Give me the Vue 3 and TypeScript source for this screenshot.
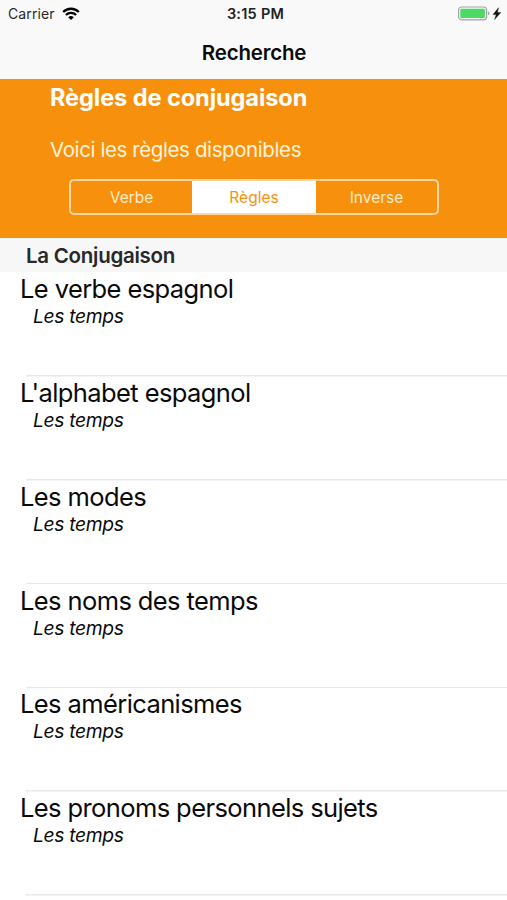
<script setup lang="ts">
interface Rule {
  title: string
  category: string
}

const segments: string[] = ['Verbe', 'Règles', 'Inverse']
const selected = 'Règles'
const rules: Rule[] = [
  'Le verbe espagnol',
  "L'alphabet espagnol",
  'Les modes',
  'Les noms des temps',
  'Les américanismes',
  'Les pronoms personnels sujets',
].map((title) => ({ title, category: 'Les temps' }))
</script>

<template>
  <main class="screen">
    <header class="top">
      <div class="status">
        <div class="carrier">
          <span>Carrier</span>
          <svg class="wifi" viewBox="0 0 18 14" width="18" height="14">
            <path d="M1.2 5 A11 11 0 0 1 16.8 5" />
            <path d="M3.9 8 A7.2 7.2 0 0 1 14.1 8" />
            <path class="dot" d="M9 13 L6.2 10.3 A4 4 0 0 1 11.8 10.3 Z" />
          </svg>
        </div>
        <time class="clock">3:15 PM</time>
        <div class="power">
          <svg viewBox="0 0 44 16" width="44" height="16">
            <rect x="0.6" y="1" width="28" height="12.8" rx="3" fill="none" stroke="#a3a3a3" stroke-width="1.2" />
            <rect x="2.3" y="2.7" width="24.6" height="9.4" rx="1" fill="#4cd964" />
            <path d="M30 5.2 Q33 7.4 30 9.6 Z" fill="#a3a3a3" />
            <path d="M40.6 1.7 L35 8.6 H38.2 L36.6 13.6 L42.8 6.5 H39.4 Z" fill="#111" stroke="#111" stroke-width="0.4" />
          </svg>
        </div>
      </div>
      <h1 class="nav-title">Recherche</h1>
    </header>
    <section class="banner">
      <h2 class="heading">Règles de conjugaison</h2>
      <p class="intro">Voici les règles disponibles</p>
      <div class="segments">
        <button v-for="s in segments" :key="s" class="segment" :class="{ active: s === selected }">{{ s }}</button>
      </div>
    </section>
    <h3 class="section">La Conjugaison</h3>
    <ul class="list">
      <li v-for="r in rules" :key="r.title" class="row">
        <span class="title">{{ r.title }}</span>
        <em class="category">{{ r.category }}</em>
      </li>
    </ul>
  </main>
</template>

<style>
body {
  background: #fff;
}
</style>

<style scoped>
.screen {
  width: 507px;
  height: 900px;
  overflow: hidden;
  background: #fff;
  color: #0a0a0a;
  font-family: Inter, 'Liberation Sans', sans-serif;
}
.top {
  height: 79px;
  background: #f9f9f9;
}
.status {
  display: grid;
  grid-template-columns: 1fr auto 1fr;
  align-items: center;
  height: 27px;
  padding: 0 5px 0 8px;
  font-size: 14px;
}
.carrier {
  display: flex;
  align-items: center;
  gap: 7px;
  color: #2a2a2a;
  letter-spacing: 0.1px;
}
.wifi path {
  fill: none;
  stroke: #000;
  stroke-width: 2.3;
}
.wifi .dot {
  fill: #000;
  stroke: none;
}
.clock {
  padding-left: 1px;
  color: #222;
  font-size: 14.5px;
  font-weight: 600;
  letter-spacing: 0.25px;
}
.power {
  display: flex;
  justify-content: flex-end;
}
.nav-title {
  margin: 0;
  padding-left: 1px;
  font-size: 20.5px;
  font-weight: 600;
  letter-spacing: -0.2px;
  line-height: 51px;
  text-align: center;
}
.banner {
  box-sizing: border-box;
  height: 159px;
  padding: 4px 68px 0 50px;
  background: #f7910d;
  color: #fff;
}
.heading {
  margin: 0;
  font-size: 23.6px;
  font-weight: 700;
  letter-spacing: -0.1px;
  line-height: 30px;
  white-space: nowrap;
}
.intro {
  margin: 22px 0 14px;
  color: #fff3d9;
  font-size: 20.5px;
  letter-spacing: -0.4px;
  line-height: 30px;
  white-space: nowrap;
}
.segments {
  display: grid;
  grid-template-columns: 121px 124px 1fr;
  box-sizing: border-box;
  height: 36px;
  margin-left: 19px;
  border: 2px solid #fdd6a0;
  border-radius: 5px;
  overflow: hidden;
}
.segment {
  padding: 0;
  border: 0;
  background: transparent;
  color: #ffecc8;
  font: 400 15.5px Inter, 'Liberation Sans', sans-serif;
}
.active {
  margin: -1px 0;
  background: #fff;
  color: #f7910d;
}
.section {
  margin: 0;
  height: 34px;
  padding-left: 26px;
  background: #f7f7f7;
  color: #282828;
  font-size: 20.5px;
  font-weight: 600;
  letter-spacing: -0.27px;
  line-height: 36px;
}
.list {
  margin: 0;
  padding: 1px 0 0;
  list-style: none;
}
.row {
  display: flex;
  flex-direction: column;
  box-sizing: border-box;
  height: 103.8px;
  padding-left: 20px;
  background: linear-gradient(#e9e9eb, #e9e9eb) 26px 100% / 100% 1.5px no-repeat;
  white-space: nowrap;
}
.title {
  margin-top: -0.8px;
  font-size: 25.5px;
  letter-spacing: -0.6px;
  line-height: 33px;
}
.category {
  padding-left: 13px;
  font-size: 19.3px;
  letter-spacing: -0.35px;
  line-height: 22px;
}
</style>
